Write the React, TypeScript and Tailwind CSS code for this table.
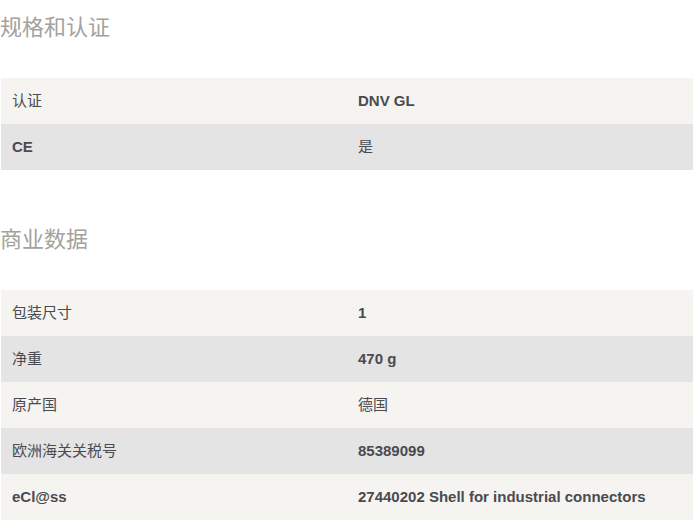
const sections = [
  {
    title: '规格和认证',
    rows: [
      { label: '认证', value: 'DNV GL' },
      { label: 'CE', value: '是' },
    ],
  },
  {
    title: '商业数据',
    rows: [
      { label: '包装尺寸', value: '1' },
      { label: '净重', value: '470 g' },
      { label: '原产国', value: '德国' },
      { label: '欧洲海关关税号', value: '85389099' },
      { label: 'eCl@ss', value: '27440202 Shell for industrial connectors' },
    ],
  },
];

const cjk = "font-['Liberation_Sans','Noto_Sans_CJK_SC',sans-serif]";

export default function App() {
  return (
    <div className={`min-h-screen bg-white pl-px ${cjk}`}>
      {sections.map((s, si) => (
        <div key={s.title} className={si === 0 ? 'pt-[13px]' : 'pt-[55px]'}>
          <h2 className="text-[22px] leading-[30px] text-[#a3a29e] -ml-px">{s.title}</h2>
          <div className="mt-[35px]">
            {s.rows.map((r, i) => (
              <div
                key={r.label}
                className={`flex h-[46px] items-center text-[15px] text-[#4b4a50] ${i % 2 === 0 ? 'bg-[#f5f4f1]' : 'bg-[#e4e4e4]'}`}
              >
                <div className={`w-[357px] pl-[11px] ${/[a-z]/i.test(r.label) ? 'font-bold' : ''}`}>{r.label}</div>
                <div className={`flex-1 ${/^[\x00-\x7f]+$/.test(r.value) ? 'font-bold' : ''}`}>{r.value}</div>
              </div>
            ))}
          </div>
        </div>
      ))}
    </div>
  );
}
